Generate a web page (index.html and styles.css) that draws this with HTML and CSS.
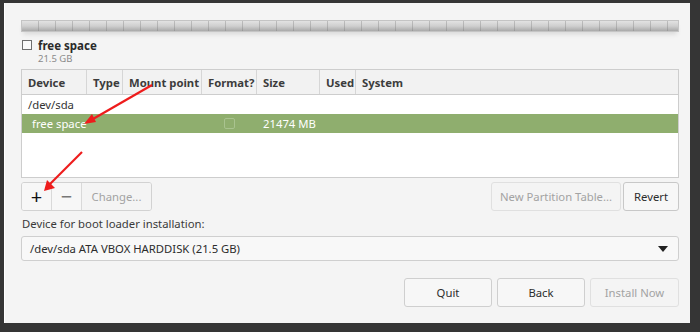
FILE: index.html
```html
<!DOCTYPE html>
<html lang="en">
<head>
    <meta charset="UTF-8">
    <title>Installation type</title>
    <link rel="stylesheet" href="styles.css">
</head>
<body>
    <div class="window">
        <div class="part-bar"></div>
        <div class="legend">
            <span class="legend-box"></span>
            <div>
                <div class="legend-name">free space</div>
                <div class="legend-size">21.5 GB</div>
            </div>
        </div>

        <div class="table">
            <div class="row head">
                <div class="c-dev">Device</div>
                <div class="c-type">Type</div>
                <div class="c-mount">Mount point</div>
                <div class="c-fmt">Format?</div>
                <div class="c-size">Size</div>
                <div class="c-used">Used</div>
                <div class="c-sys">System</div>
            </div>
            <div class="row disk">
                <div class="c-dev">/dev/sda</div>
            </div>
            <div class="row selected">
                <div class="c-dev indent">free space</div>
                <div class="c-type"></div>
                <div class="c-mount"></div>
                <div class="c-fmt"><span class="fmt-box"></span></div>
                <div class="c-size">21474 MB</div>
                <div class="c-used"></div>
                <div class="c-sys"></div>
            </div>
        </div>

        <div class="toolbar">
            <div class="btn-group">
                <button class="btn icon">+</button>
                <button class="btn icon minus">&minus;</button>
                <button class="btn disabled">Change...</button>
            </div>
            <div class="right-group">
                <button class="btn disabled wide">New Partition Table...</button>
                <button class="btn revert">Revert</button>
            </div>
        </div>

        <div class="boot-label">Device for boot loader installation:</div>
        <div class="combo">
            <span>/dev/sda ATA VBOX HARDDISK (21.5 GB)</span>
            <span class="combo-arrow"></span>
        </div>

        <div class="actions">
            <button class="btn action">Quit</button>
            <button class="btn action">Back</button>
            <button class="btn action disabled">Install Now</button>
        </div>
    </div>

    <svg class="arrows" width="700" height="332" viewBox="0 0 700 332">
        <line x1="152" y1="85" x2="93" y2="119" stroke="#ee1c1c" stroke-width="2.2"/>
        <polygon points="84,124 92,114 96,122" fill="#ee1c1c"/>
        <line x1="82" y1="152" x2="50" y2="184" stroke="#ee1c1c" stroke-width="2.2"/>
        <polygon points="44,191 47,180 55,188" fill="#ee1c1c"/>
    </svg>
</body>
</html>
```

FILE: styles.css
```css
* {
    box-sizing: border-box;
}
body {
    margin: 0;
    width: 700px;
    height: 332px;
    background-color: #353535;
    font-family: "Noto Sans", "Open Sans", sans-serif;
    font-size: 11.3px;
    color: #333333;
    position: relative;
    overflow: hidden;
}
.window {
    margin: 3px 10px 0 4px;
    height: 320px;
    background-color: #f4f4f4;
    border-left: 1px solid #ffffff;
    padding: 17px 11px 0 16px;
    display: flex;
    flex-direction: column;
}
.part-bar {
    height: 12px;
    flex-shrink: 0;
    border: 1px solid #c4c4c4;
    background-image:
        repeating-linear-gradient(to right, transparent 0, transparent 16px, rgba(120, 120, 120, 0.35) 16px, rgba(120, 120, 120, 0.35) 17px),
        linear-gradient(#e2e2e2, #cfcfcf 50%, #a9a9a9);
    box-shadow: 0 4px 5px -2px rgba(0, 0, 0, 0.12);
}
.legend {
    display: flex;
    gap: 6px;
    margin-top: 8px;
    margin-left: 1px;
    height: 25px;
}
.legend-box {
    width: 10px;
    height: 10px;
    border: 1px solid #6e6e6e;
    background-color: #fafafa;
}
.legend-name {
    font-weight: bold;
    font-size: 11.5px;
    line-height: 11px;
    color: #2a2a2a;
}
.legend-size {
    font-size: 9.5px;
    line-height: 15px;
    color: #8a8a8a;
}
.table {
    margin-top: 4px;
    height: 109px;
    flex-shrink: 0;
    border: 1px solid #cdcdcd;
    background-color: #ffffff;
}
.row {
    display: flex;
    height: 19px;
    align-items: center;
}
.row > div {
    padding-left: 6px;
    white-space: nowrap;
}
.head {
    height: 25px;
    background-color: #f2f2f2;
    border-bottom: 1px solid #cdcdcd;
    font-weight: bold;
    color: #3c3c3c;
}
.head > div {
    height: 100%;
    display: flex;
    align-items: center;
    border-right: 1px solid #d6d6d6;
}
.head > div:last-child {
    border-right: none;
}
.c-dev { width: 65px; }
.c-type { width: 36px; }
.c-mount { width: 79px; }
.c-fmt { width: 55px; }
.c-size { width: 63px; }
.c-used { width: 36px; }
.c-sys { flex: 1; }
.selected {
    background-color: #8fae6e;
    color: #ffffff;
}
.indent {
    padding-left: 10px !important;
}
.fmt-box {
    display: block;
    width: 11px;
    height: 11px;
    margin-left: 16px;
    border: 1px solid #a9c38f;
    border-radius: 2px;
}
.toolbar {
    display: flex;
    justify-content: space-between;
    margin-top: 4px;
    height: 29px;
    flex-shrink: 0;
}
.btn-group {
    display: flex;
    border: 1px solid #d2d2d2;
    border-radius: 3px;
    overflow: hidden;
}
.btn {
    font-family: inherit;
    font-size: 11.3px;
    color: #2c2c2c;
    background-color: #f7f7f7;
    border: 1px solid #cfcfcf;
    border-radius: 3px;
    padding: 0 6px;
    height: 29px;
    white-space: nowrap;
}
.btn-group .btn {
    border: none;
    border-radius: 0;
    border-right: 1px solid #d9d9d9;
    height: 27px;
}
.btn-group .btn:last-child {
    border-right: none;
}
.btn.icon {
    width: 30px;
    padding: 0;
    font-size: 20px;
    line-height: 1;
    color: #111111;
}
.btn.minus {
    color: #777777;
}
.btn.disabled {
    color: #a3a3a3;
    background-color: #f4f4f4;
    border-color: #e0e0e0;
}
.btn-group .btn.disabled {
    width: 69px;
}
.right-group {
    display: flex;
    gap: 2px;
}
.btn.wide {
    width: 130px;
}
.btn.revert {
    width: 56px;
    border-color: #c8c8c8;
}
.boot-label {
    margin-top: 4px;
    margin-left: 1px;
    line-height: 18px;
    color: #3a3a3a;
}
.combo {
    margin-top: 3px;
    height: 25px;
    flex-shrink: 0;
    border: 1px solid #cfcfcf;
    border-radius: 3px;
    background-color: #f8f8f8;
    display: flex;
    align-items: center;
    justify-content: space-between;
    padding: 0 10px 0 8px;
    color: #2c2c2c;
}
.combo-arrow {
    width: 0;
    height: 0;
    border-left: 5px solid transparent;
    border-right: 5px solid transparent;
    border-top: 6px solid #222222;
}
.actions {
    display: flex;
    justify-content: flex-end;
    gap: 5px;
    margin-top: 17px;
}
.btn.action {
    width: 88px;
    height: 29px;
}
.btn.action.disabled {
    width: 89px;
}
.arrows {
    position: absolute;
    left: 0;
    top: 0;
    pointer-events: none;
}
```
